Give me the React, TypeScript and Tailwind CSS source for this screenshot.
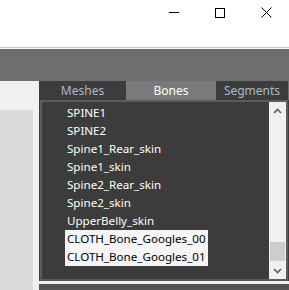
import React from "react";

const bones = [
  "SPINE1",
  "SPINE2",
  "Spine1_Rear_skin",
  "Spine1_skin",
  "Spine2_Rear_skin",
  "Spine2_skin",
  "UpperBelly_skin",
  "CLOTH_Bone_Googles_00",
  "CLOTH_Bone_Googles_01",
];

const selected = new Set([7, 8]);

function CaptionButtons() {
  return (
    <div className="flex h-[25px] justify-end">
      <div className="flex w-[46px] items-center justify-center">
        <svg width="10" height="10" viewBox="0 0 10 10">
          <path d="M0 4.5H10" stroke="#000" strokeWidth="1" />
        </svg>
      </div>
      <div className="flex w-[46px] items-center justify-center">
        <svg width="10" height="10" viewBox="0 0 10 10">
          <rect x="0.5" y="0.5" width="9" height="9" fill="none" stroke="#000" strokeWidth="1" />
        </svg>
      </div>
      <div className="flex w-[46px] items-center justify-center">
        <svg width="11" height="11" viewBox="0 0 11 11">
          <path d="M0.5 0.5L10.5 10.5M10.5 0.5L0.5 10.5" stroke="#000" strokeWidth="1" />
        </svg>
      </div>
    </div>
  );
}

export default function App() {
  return (
    <div
      className="flex h-[290px] w-[289px] flex-col overflow-hidden bg-[#f0f0f0]"
      style={{ fontFamily: '"Noto Sans", "Open Sans", sans-serif' }}
    >
      {/* title bar */}
      <div className="h-[47px] bg-white">
        <CaptionButtons />
      </div>
      <div className="h-px bg-[#c6c6c6]" />
      <div className="h-px bg-[#f4f4f4]" />
      <div className="h-[32px] bg-[#6e6e6e]" />

      {/* body */}
      <div className="flex flex-1">
        {/* left panel */}
        <div className="flex w-[39px] flex-col">
          <div className="h-[29px]" />
          <div className="w-[33px] flex-1 bg-[#d9d9d9]" />
        </div>

        {/* right panel */}
        <div className="flex flex-1 flex-col">
          <div className="flex h-[200px] flex-col bg-[#3c3c3c]">
            {/* tabs */}
            <div className="flex h-[19px] text-[12px] leading-[19px]">
              <div className="w-[87px] text-center text-[#a9bac8]">Meshes</div>
              <div className="w-[90px] bg-[#7a7a7a] text-center text-white">Bones</div>
              <div className="w-[72px] text-center text-[#a9bac8]">Segments</div>
              <div className="flex-1 bg-[#6e6e6e]" />
            </div>

            {/* list box */}
            <div className="ml-[1px] mr-[1px] flex flex-1 border-2 border-[#5c5c5c] bg-[#3c3c3c]">
              <div className="flex-1 pl-[23px] pt-[2px]">
                {bones.map((b, i) => (
                  <div key={b} className="flex h-[18px] items-center">
                    <span
                      className={
                        selected.has(i)
                          ? "bg-[#f5f5f5] px-[2px] text-[11.6px] leading-[18px] text-black"
                          : "px-[2px] text-[11.6px] leading-[18px] text-white"
                      }
                    >
                      {b}
                    </span>
                  </div>
                ))}
              </div>

              {/* scrollbar */}
              <div className="flex w-[17px] flex-col bg-[#f0f0f0]">
                <div className="flex h-[17px] items-center justify-center">
                  <svg width="9" height="6" viewBox="0 0 9 6">
                    <path d="M1 5L4.5 1.5L8 5" fill="none" stroke="#606060" strokeWidth="1.6" />
                  </svg>
                </div>
                <div className="flex flex-1 flex-col justify-end">
                  <div className="mx-[1px] mb-[1px] h-[19px] bg-[#cdcdcd]" />
                </div>
                <div className="flex h-[17px] items-center justify-center">
                  <svg width="9" height="6" viewBox="0 0 9 6">
                    <path d="M1 1L4.5 4.5L8 1" fill="none" stroke="#606060" strokeWidth="1.6" />
                  </svg>
                </div>
              </div>
            </div>
          </div>
          <div className="h-[3px]" />
          <div className="flex-1 bg-[#555555]" />
        </div>
      </div>
    </div>
  );
}
